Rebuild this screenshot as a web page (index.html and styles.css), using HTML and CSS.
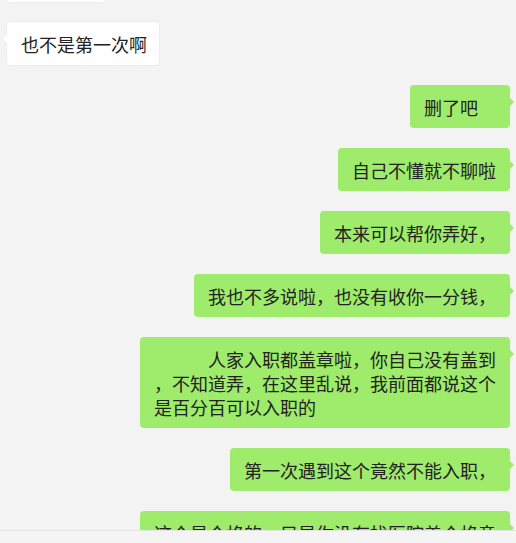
FILE: index.html
```html
<!DOCTYPE html>
<html lang="zh-CN">
<head>
    <meta charset="UTF-8">
    <meta name="viewport" content="width=device-width, initial-scale=1.0">
    <title>聊天记录</title>
    <link rel="stylesheet" href="styles.css">
</head>
<body>
    <div class="chat">
        <div class="messages">
            <div class="msg left"><div class="bubble">嗯嗯好的</div></div>
            <div class="msg left"><div class="bubble">也不是第一次啊</div></div>
            <div class="msg right"><div class="bubble">删了吧　</div></div>
            <div class="msg right"><div class="bubble">自己不懂就不聊啦</div></div>
            <div class="msg right"><div class="bubble">本来可以帮你弄好，</div></div>
            <div class="msg right"><div class="bubble">我也不多说啦，也没有收你一分钱，</div></div>
            <div class="msg right"><div class="bubble">　　　人家入职都盖章啦，你自己没有盖到，不知道弄，在这里乱说，我前面都说这个是百分百可以入职的</div></div>
            <div class="msg right"><div class="bubble">第一次遇到这个竟然不能入职，</div></div>
            <div class="msg right"><div class="bubble">这个是合格的，只是你没有找医院盖个格章，自己去弄吧</div></div>
        </div>
    </div>
    <div class="footer"></div>
</body>
</html>
```

FILE: styles.css
```css
html, body {
    margin: 0;
    height: 100%;
}
body {
    display: flex;
    flex-direction: column;
    background-color: #f3f3f3;
    color: #222;
    font-family: "Noto Sans CJK SC", "Microsoft YaHei", sans-serif;
    font-size: 18px;
}
.chat {
    height: 530px;
    flex-shrink: 0;
    overflow: hidden;
}
.messages {
    display: flex;
    flex-direction: column;
    gap: 20px;
    margin-top: -41px;
    padding: 0 6px 0 7px;
}
.msg {
    display: flex;
}
.msg.right {
    justify-content: flex-end;
}
.bubble {
    position: relative;
    max-width: 342px;
    padding: 10px 14px 9px 14px;
    line-height: 24px;
    border-radius: 4px;
    word-break: break-all;
    line-break: anywhere; /* the original lets "，" start a line */
}
.left .bubble {
    background-color: #fff;
    box-shadow: 0 0 0 1px #ececec;
    padding-right: 12px;
}
.right .bubble {
    background-color: #9feb6b;
}
/* small tails on the bubbles */
.bubble::after {
    content: "";
    position: absolute;
    top: 12px;
    border: 5px solid transparent;
}
.left .bubble::after {
    left: -9px;
    border-right-color: #fff;
}
.right .bubble::after {
    right: -9px;
    border-left-color: #9feb6b;
}
.footer {
    flex: 1;
    border-top: 1px solid #e4e4e4;
    background-color: #f4f4f4;
}
```
